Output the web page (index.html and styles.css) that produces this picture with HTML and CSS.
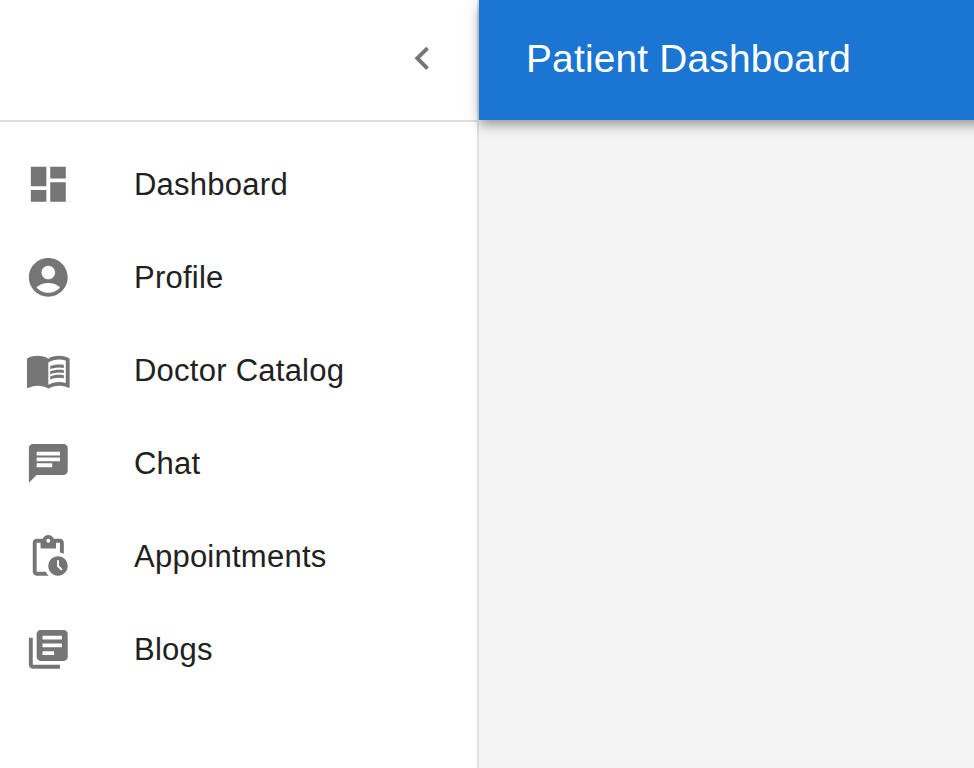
FILE: index.html
```html
<!DOCTYPE html>
<html lang="en">
<head>
<meta charset="utf-8">
<title>Patient Dashboard</title>
<link rel="stylesheet" href="styles.css">
</head>
<body>
<div class="layout">
  <aside class="drawer">
    <div class="drawer-header">
      <button class="collapse" aria-label="Collapse menu"><svg class="icon" viewBox="0 0 24 24"><path d="M15.41 7.41 14 6l-6 6 6 6 1.41-1.41L10.83 12z"/></svg></button>
    </div>
    <nav class="menu">
      <a class="item"><svg class="icon" viewBox="0 0 24 24"><path d="M3 13h8V3H3v10zm0 8h8v-6H3v6zm10 0h8V11h-8v10zm0-18v6h8V3h-8z"/></svg><span class="label">Dashboard</span></a>
      <a class="item"><svg class="icon" viewBox="0 0 24 24"><path d="M12 2C6.48 2 2 6.48 2 12s4.480 10 10 10 10-4.480 10-10S17.520 2 12 2zm0 4c1.930 0 3.500 1.570 3.500 3.500S13.930 13 12 13s-3.500-1.570-3.500-3.500S10.070 6 12 6zm0 14c-2.030 0-4.430-.820-6.140-2.880C7.550 15.800 9.680 15 12 15s4.450.800 6.140 2.120C16.430 19.180 14.030 20 12 20z"/></svg><span class="label">Profile</span></a>
      <a class="item"><svg class="icon" viewBox="0 0 24 24"><path d="M21 5c-1.110-.350-2.330-.500-3.500-.500-1.950 0-4.050.400-5.500 1.500-1.450-1.100-3.550-1.500-5.500-1.500S2.450 4.900 1 6v14.650c0 .250.250.500.500.500.100 0 .150-.050.250-.050C3.100 20.450 5.050 20 6.500 20c1.950 0 4.050.400 5.500 1.500 1.350-.850 3.800-1.500 5.500-1.500 1.650 0 3.350.300 4.750 1.050.100.050.150.050.250.050.250 0 .500-.250.500-.500V6c-.600-.450-1.250-.750-2-1zm0 13.500c-1.100-.350-2.300-.500-3.500-.500-1.700 0-4.150.650-5.500 1.500V8c1.350-.850 3.800-1.500 5.500-1.500 1.200 0 2.400.150 3.500.500v11.500z"/><path d="M17.500 10.500c.880 0 1.730.090 2.500.260V9.240c-.790-.150-1.640-.240-2.500-.240-1.700 0-3.240.290-4.500.830v1.660c1.130-.640 2.700-.990 4.500-.990zM13 12.490v1.660c1.130-.640 2.700-.990 4.500-.990.880 0 1.730.090 2.500.260V11.900c-.790-.150-1.640-.240-2.500-.240-1.700 0-3.240.300-4.500.830zM17.500 14.330c-1.700 0-3.240.290-4.500.830v1.660c1.130-.640 2.700-.990 4.500-.990.880 0 1.730.090 2.500.260v-1.520c-.790-.160-1.640-.240-2.500-.240z"/></svg><span class="label">Doctor Catalog</span></a>
      <a class="item"><svg class="icon" viewBox="0 0 24 24"><path d="M20 2H4c-1.100 0-1.990.900-1.990 2L2 22l4-4h14c1.100 0 2-.900 2-2V4c0-1.100-.900-2-2-2zM6 9h12v2H6V9zm8 5H6v-2h8v2zm4-6H6V6h12v2z"/></svg><span class="label">Chat</span></a>
      <a class="item"><svg class="icon" viewBox="0 0 24 24"><path d="M17 12c-2.760 0-5 2.240-5 5s2.240 5 5 5 5-2.240 5-5-2.240-5-5-5zm1.650 7.350L16.500 17.200V14h1v2.790l1.850 1.850-.700.710zM18 3h-3.180C14.400 1.840 13.300 1 12 1s-2.400.840-2.820 2H6c-1.100 0-2 .900-2 2v15c0 1.100.900 2 2 2h6.110c-.590-.570-1.070-1.250-1.420-2H6V5h2v3h8V5h2v5.080c.710.100 1.380.310 2 .600V5c0-1.100-.900-2-2-2zm-6 2c-.550 0-1-.450-1-1s.450-1 1-1 1 .450 1 1-.450 1-1 1z"/></svg><span class="label">Appointments</span></a>
      <a class="item"><svg class="icon" viewBox="0 0 24 24"><path d="M4 6H2v14c0 1.100.900 2 2 2h14v-2H4V6zm16-4H8c-1.100 0-2 .900-2 2v12c0 1.100.900 2 2 2h12c1.100 0 2-.900 2-2V4c0-1.100-.900-2-2-2zm-1 9H9V9h10v2zm-4 4H9v-2h6v2zm4-8H9V5h10v2z"/></svg><span class="label">Blogs</span></a>
    </nav>
  </aside>
  <div class="content">
    <header class="appbar"><h1 class="title">Patient Dashboard</h1></header>
    <main></main>
  </div>
</div>
</body>
</html>
```
FILE: styles.css
```css
* { box-sizing: border-box; }
body {
  margin: 0;
  font-family: "Liberation Sans", Arial, sans-serif;
  color: #212121;
  background: #f4f4f4;
}
.layout { display: flex; height: 100vh; overflow: hidden; }
.drawer {
  flex: 0 0 479px;
  background: #fff;
  border-right: 2px solid #e0e0e0;
}
.drawer-header {
  display: flex;
  align-items: center;
  justify-content: flex-end;
  height: 122px;
  padding: 0 31px 3px 0;
  border-bottom: 2px solid #e0e0e0;
}
.collapse {
  display: flex;
  border: 0;
  padding: 0;
  background: none;
}
.icon {
  flex: none;
  width: 46.6px;
  height: 46.6px;
  fill: #757575;
}
.menu { padding-top: 16px; }
.item {
  display: flex;
  align-items: center;
  height: 93px;
  padding-left: 25.2px;
}
.item .icon { margin-bottom: 0.6px; }
.label {
  margin-left: 62.2px;
  font-size: 31px;
  line-height: 46px;
  letter-spacing: 0.25px;
}
.content { flex: 1; min-width: 0; }
.appbar {
  position: relative;
  display: flex;
  align-items: center;
  height: 120px;
  margin-right: -40px;
  padding: 0 0 2px 47px;
  color: #fff;
  background: #1b76d3;
  box-shadow: 0 4px 8px -2px rgba(0, 0, 0, .2), 0 8px 10px 0 rgba(0, 0, 0, .14), 0 2px 19px 0 rgba(0, 0, 0, .12);
}
.title {
  margin: 0;
  font-size: 38.8px;
  font-weight: 400;
  letter-spacing: 0.22px;
  white-space: nowrap;
}
```
